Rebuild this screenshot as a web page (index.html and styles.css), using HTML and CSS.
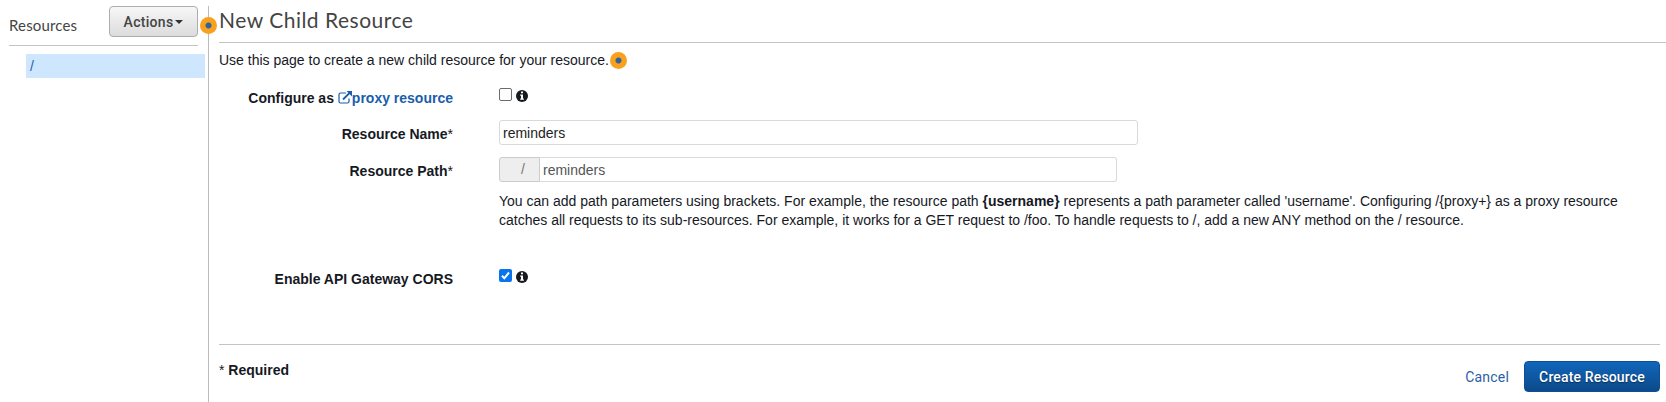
FILE: index.html
```html
<!DOCTYPE html>
<html lang="en">
<head>
<meta charset="utf-8">
<title>New Child Resource</title>
<link rel="stylesheet" href="styles.css">
</head>
<body>
<svg class="sprite" aria-hidden="true">
  <symbol id="info" viewBox="0 0 12 12"><circle cx="6" cy="6" r="6" fill="#16191f"/><path fill="#fff" d="M5 1.6h2v1.7H5zM4.2 4.4H7v4h.9v1.4H4.2V8.400H5V5.700h-.8z"/></symbol>
</svg>
<div class="app">
  <aside class="sidebar">
    <div class="sidebar-head">
      <span class="sidebar-title">Resources</span>
      <button class="btn-actions" type="button"><span>Actions</span><i class="caret"></i></button>
    </div>
    <div class="tree-item">/</div>
    <span class="hotspot hotspot-edge"></span>
  </aside>
  <main class="main">
    <h1 class="title">New Child Resource</h1>
    <p class="intro"><span class="intro-text">Use this page to create a new child resource for your resource.</span><span class="hotspot"></span></p>
    <form class="form">
      <div class="row row-proxy">
        <label class="label">Configure as <a class="link"><svg class="external" viewBox="0 0 14 13" fill="none" stroke="currentColor"><path stroke-width="1.200" d="M8 2H2.500Q1 2 1 3.500V10.500Q1 12 2.500 12H9.500Q11 12 11 10.500V7.500"/><path stroke-width="1.800" d="M5 8.500 12 1.500"/><path fill="currentColor" stroke="none" d="M8.500 0H14V5.500z"/></svg>proxy resource</a></label>
        <div class="check"><span class="box"></span><svg class="info"><use href="#info"/></svg></div>
      </div>
      <div class="row row-name">
        <label class="label">Resource Name<span class="star">*</span></label>
        <input class="input input-name" type="text" value="reminders">
      </div>
      <div class="row row-path">
        <label class="label">Resource Path<span class="star">*</span></label>
        <div class="group"><span class="prefix">/</span><input class="input input-path" type="text" value="reminders"></div>
      </div>
      <div class="help">
        <div class="help-line">You can add path parameters using brackets. For example, the resource path <b>{username}</b> represents a path parameter called 'username'. Configuring /{proxy+} as a proxy resource</div>
        <div class="help-line">catches all requests to its sub-resources. For example, it works for a GET request to /foo. To handle requests to /, add a new ANY method on the / resource.</div>
      </div>
      <div class="row row-cors">
        <label class="label">Enable API Gateway CORS</label>
        <div class="check"><span class="box checked"><svg viewBox="0 0 13 13"><path d="M3 6.800 5.300 9.300 10 3.500" fill="none" stroke="#fff" stroke-width="2"/></svg></span><svg class="info"><use href="#info"/></svg></div>
      </div>
    </form>
    <footer class="footer">
      <div class="required"><span class="star">*</span> Required</div>
      <div class="buttons"><a class="cancel">Cancel</a><button class="btn-create" type="button">Create Resource</button></div>
    </footer>
  </main>
</div>
</body>
</html>
```
FILE: styles.css
```css
* { box-sizing: border-box; }
body {
  margin: 0;
  background: #fff;
  color: #16191f;
  font: 14px/19px "Liberation Sans", Arial, sans-serif;
  overflow: hidden;
}
.sprite { display: none; }
.app { display: flex; height: 402px; padding-top: 6px; }
.sidebar {
  position: relative;
  flex: none;
  width: 209px;
  border-right: 1px solid #bbb;
}
.sidebar-head {
  display: flex;
  justify-content: space-between;
  align-items: flex-start;
  width: 189px;
  height: 40px;
  margin-left: 9px;
  border-bottom: 1px solid #c4c4c4;
}
.sidebar-title {
  padding-top: 10px;
  font: 15px/19px Lato, sans-serif;
  letter-spacing: .15px;
  color: #444;
}
.btn-actions {
  display: flex;
  align-items: center;
  justify-content: center;
  width: 89px;
  height: 31px;
  padding: 1px 0 0;
  border: 1px solid #adadad;
  border-radius: 4px;
  background: linear-gradient(#f7f7f7, #dcdcdc);
  color: #444;
  font: 500 14px/19px Roboto, sans-serif;
  letter-spacing: .3px;
}
.caret {
  margin-left: 2px;
  border: 4px solid transparent;
  border-top-color: #333;
  border-bottom: 0;
}
.tree-item {
  width: 179px;
  height: 24px;
  margin: 8px 0 0 26px;
  padding-left: 4px;
  background: #cfe6ff;
  color: #2a5fa5;
  line-height: 24px;
}
.hotspot {
  flex: none;
  width: 17px;
  height: 17px;
  border-radius: 50%;
  background: radial-gradient(circle, #2c659b 2.500px, #f9a01e 3.500px);
}
.hotspot-edge { position: absolute; right: -9px; top: 11px; }
.main { flex: 1; padding-left: 10px; }
.title {
  height: 37px;
  margin: 0;
  padding-top: 2px;
  border-bottom: 1px solid #c4c4c4;
  color: #444;
  font: 400 21px/24px Lato, sans-serif;
  letter-spacing: .5px;
}
.intro { display: flex; height: 19px; margin: 8px 0 0; }
.intro .hotspot { margin-left: 1px; margin-top: 1px; }
.row { display: flex; }
.label { width: 234px; margin-right: 46px; text-align: right; font-weight: bold; white-space: nowrap; }
.star { font-weight: normal; }
.link { color: #1a5dab; }
.external { width: 14px; height: 13px; vertical-align: -1px; }
.check { display: flex; }
.box { width: 13px; height: 13px; border: 1px solid #6b6b6b; border-radius: 2px; }
.checked { border: 0; background: #0a73ee; }
.checked svg { display: block; width: 13px; height: 13px; }
.info { width: 12px; height: 12px; margin: 2px 0 0 4px; }
.row-proxy { height: 32px; margin-top: 18px; }
.row-proxy .label { padding-top: 1px; }
.row-name .label, .row-path .label { padding-top: 5px; }
.input {
  height: 25px;
  padding: 0 3px;
  border: 1px solid #d9d9d9;
  border-radius: 3px;
  background: #fff;
  color: #222;
  font: 14px "Liberation Sans", Arial, sans-serif;
}
.input-name { width: 639px; }
.row-path { margin-top: 12px; }
.group { display: flex; }
.prefix {
  width: 41px;
  height: 25px;
  padding-left: 21px;
  border: 1px solid #ccc;
  border-radius: 3px 0 0 3px;
  background: #eee;
  color: #777;
  line-height: 23px;
}
.input-path { width: 577px; border-left: 0; border-radius: 0 3px 3px 0; color: #555; }
.help { margin: 10px 0 0 280px; white-space: nowrap; }
.row-cors { margin-top: 39px; }
.row-cors .label { padding-top: 1px; }
.footer {
  display: flex;
  justify-content: space-between;
  width: 1441px;
  margin-top: 55px;
  border-top: 1px solid #c4c4c4;
}
.required { padding-top: 16px; font-weight: bold; }
.buttons { display: flex; align-items: center; padding-top: 16px; }
.cancel { margin-right: 15px; padding-top: 2px; color: #2a5fa5; font: 14px/19px Roboto, sans-serif; letter-spacing: .2px; }
.btn-create {
  width: 136px;
  height: 31px;
  padding: 2px 0 0;
  border: 1px solid #0d4f92;
  border-radius: 4px;
  background: linear-gradient(#1166bb, #0c4a8a);
  color: #fff;
  font: 500 14px/19px Roboto, sans-serif;
  letter-spacing: .15px;
  text-shadow: 0 1px 1px #0a2f55;
}
```
